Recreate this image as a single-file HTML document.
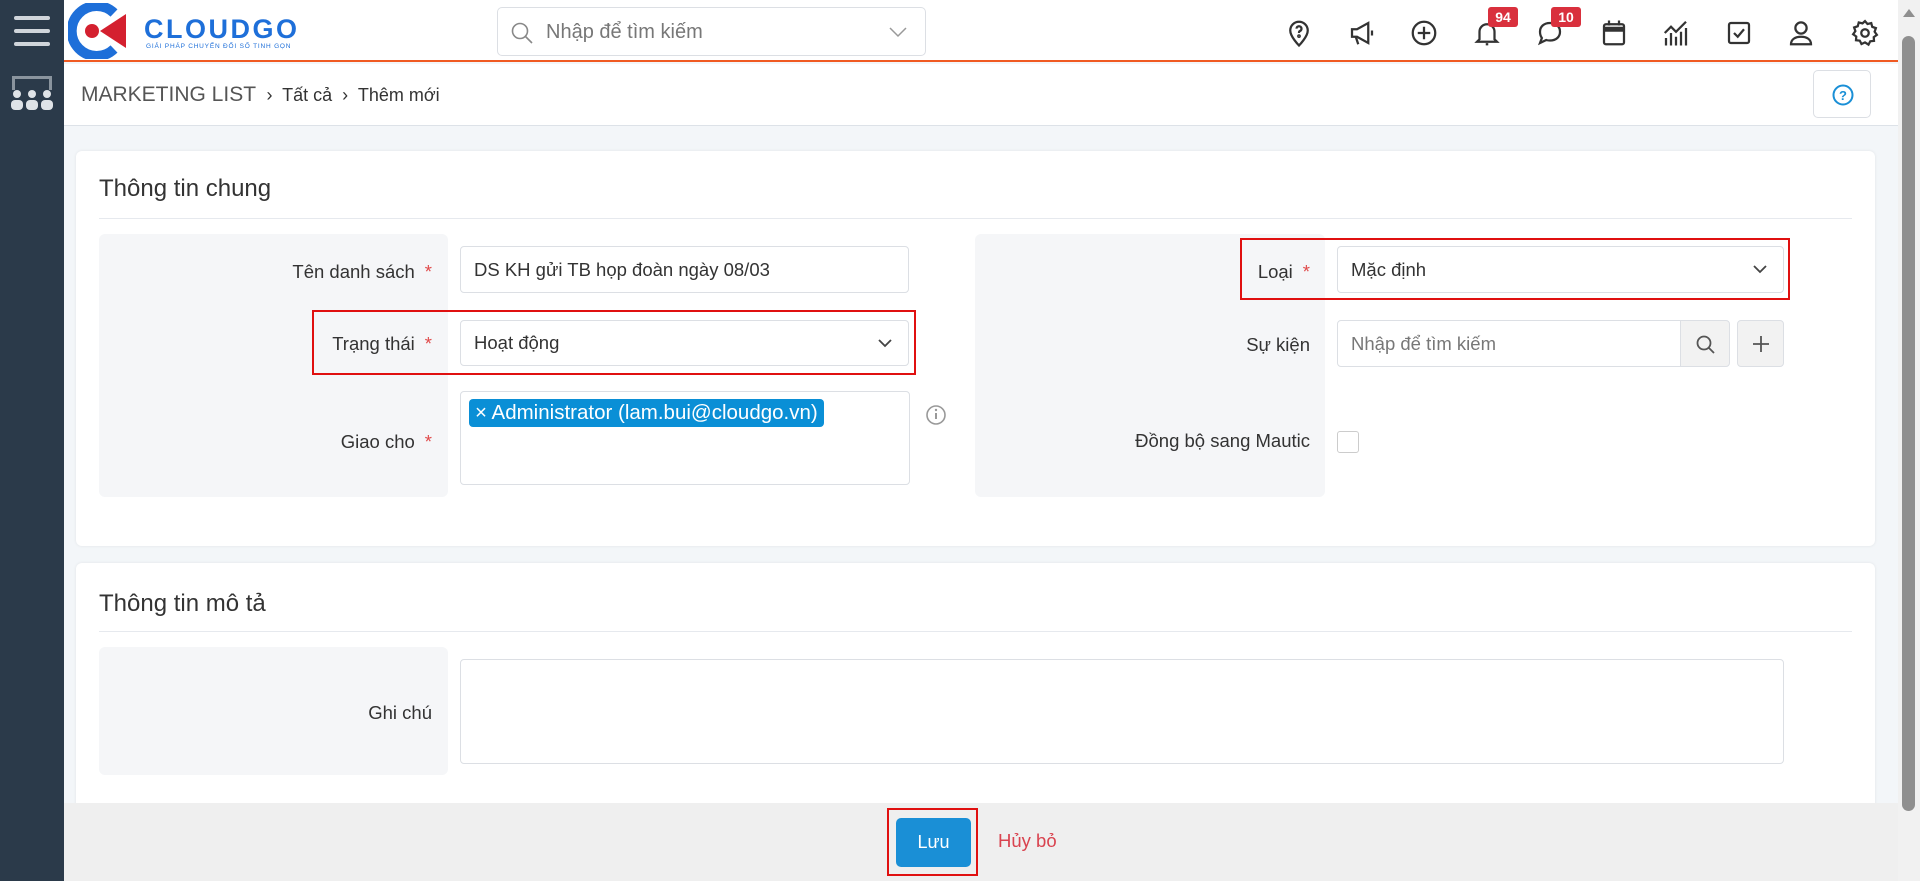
<!DOCTYPE html>
<html><head><meta charset="utf-8"><style>
*{box-sizing:border-box;margin:0;padding:0}
body{width:1920px;height:881px;overflow:hidden;background:#f3f6f9;font-family:"Liberation Sans",sans-serif;color:#333;position:relative}
.a{position:absolute}
.side{left:0;top:0;width:64px;height:881px;background:#2b3a4a}
.hdr{left:64px;top:0;width:1834px;height:62px;background:#fff;border-bottom:2px solid #f05a22}
.bc{left:64px;top:64px;width:1834px;height:62px;background:#fff;border-bottom:1px solid #dde2e8}
.card{background:#fff;border-radius:6px;box-shadow:0 0 3px rgba(0,0,0,.08)}
.ttl{font-size:24px;color:#333}
.hr{height:1px;background:#e6e9ee}
.lb{background:#f5f6f8;border-radius:6px}
.lab{font-size:18.5px;color:#333;text-align:right}
.st{color:#e04b4b;margin-left:10px}
.inp{background:#fff;border:1px solid #dcdfe4;border-radius:4px;font-size:18.5px;padding:0 13px;display:flex;align-items:center}
.red{border:2px solid #e01010}
.ic{width:30px;height:30px;top:18px}
.badge{background:#d9303d;color:#fff;font-size:14px;font-weight:bold;border-radius:3px;text-align:center;line-height:20px;height:20px;top:7px}
</style></head><body>
<div class="a side">
 <div class="a" style="left:14px;top:16px;width:36px;height:4px;background:#d0d5db;border-radius:2px"></div>
 <div class="a" style="left:14px;top:29px;width:36px;height:4px;background:#d0d5db;border-radius:2px"></div>
 <div class="a" style="left:14px;top:42px;width:36px;height:4px;background:#d0d5db;border-radius:2px"></div>
 <div class="a" style="left:12px;top:76px;width:40px;height:14px;border:3px solid #8a949e;border-bottom:none"></div>
 <svg class="a" style="left:9px;top:88px" width="46" height="24"><g fill="#dfe3e7"><circle cx="8" cy="6" r="4"/><circle cx="23" cy="6" r="4"/><circle cx="38" cy="6" r="4"/><rect x="2" y="12" width="12" height="10" rx="4"/><rect x="17" y="12" width="12" height="10" rx="4"/><rect x="32" y="12" width="12" height="10" rx="4"/></g></svg>
</div>
<div class="a hdr">
 <svg class="a" style="left:4px;top:3px" width="62" height="56"><path d="M46 10 A25 25 0 1 0 46 46" fill="none" stroke="#1e6fd9" stroke-width="10"/><circle cx="24" cy="28" r="7" fill="#d4202f"/><path d="M32 28 L58 11 L58 45Z" fill="#d4202f"/></svg>
 <div class="a" style="left:80px;top:14px;font-size:27px;font-weight:bold;color:#1e6fd9;letter-spacing:2.5px">CLOUDGO</div>
 <div class="a" style="left:82px;top:43px;font-size:6.5px;color:#1e6fd9;letter-spacing:.8px">GIẢI PHÁP CHUYỂN ĐỔI SỐ TINH GỌN</div>
 <div class="a" style="left:433px;top:7px;width:429px;height:49px;border:1px solid #dcdfe4;border-radius:5px">
  <svg class="a" style="left:12px;top:13px" width="24" height="24"><circle cx="10" cy="10" r="7.5" fill="none" stroke="#888" stroke-width="1.6"/><path d="M15.5 15.5L22 22" stroke="#888" stroke-width="1.6"/></svg>
  <div class="a" style="left:48px;top:13px;font-size:20px;color:#777">Nhập để tìm kiếm</div>
  <svg class="a" style="left:390px;top:18px" width="20" height="12"><path d="M2 2l8 8 8-8" fill="none" stroke="#999" stroke-width="1.5"/></svg>
 </div>
 <svg class="a ic" style="left:1220px" viewBox="0 0 24 24" fill="none" stroke="#333" stroke-width="1.8"><path d="M12 22s-7-7-7-12a7 7 0 0 1 14 0c0 5-7 12-7 12z"/><path d="M10 8.5a2 2 0 1 1 2.5 2c-.5.2-.5.8-.5 1.5"/><circle cx="12" cy="14.5" r=".6"/></svg>
 <svg class="a ic" style="left:1283px" viewBox="0 0 24 24" fill="none" stroke="#333" stroke-width="1.8"><path d="M4 9h4l9-5v16l-9-5H4z"/><path d="M7 15l2 6"/><path d="M20 10v4"/></svg>
 <svg class="a ic" style="left:1345px" viewBox="0 0 24 24" fill="none" stroke="#333" stroke-width="1.8"><circle cx="12" cy="12" r="9"/><path d="M12 7v10M7 12h10"/></svg>
 <svg class="a ic" style="left:1408px" viewBox="0 0 24 24" fill="none" stroke="#333" stroke-width="1.8"><path d="M6 17V11a6 6 0 0 1 12 0v6l2 2H4z"/><path d="M11 21h2"/></svg>
 <svg class="a ic" style="left:1471px" viewBox="0 0 24 24" fill="none" stroke="#333" stroke-width="1.8"><path d="M12 4c5 0 8 3 8 7s-3 7-8 7c-1 0-2 0-3-.4L4 20l1.5-4C4.5 14.6 4 13 4 11c0-4 3-7 8-7z"/></svg>
 <svg class="a ic" style="left:1535px" viewBox="0 0 24 24" fill="none" stroke="#333" stroke-width="1.8"><rect x="4" y="5" width="16" height="16" rx="1.5"/><path d="M4 9h16" stroke-width="4"/><path d="M8 2v4M16 2v4"/></svg>
 <svg class="a ic" style="left:1597px" viewBox="0 0 24 24" fill="none" stroke="#333" stroke-width="1.8"><path d="M3 12l5-5 4 4 8-8"/><path d="M4 16v6M8 12v10M12 15v7M16 11v11M20 8v14"/></svg>
 <svg class="a ic" style="left:1660px" viewBox="0 0 24 24" fill="none" stroke="#333" stroke-width="1.8"><rect x="4" y="4" width="16" height="16" rx="1.5"/><path d="M8 12l3 3 5-6"/></svg>
 <svg class="a ic" style="left:1722px" viewBox="0 0 24 24" fill="none" stroke="#333" stroke-width="1.8"><circle cx="12" cy="8" r="4.5"/><path d="M4 21c0-4 3.5-6 8-6s8 2 8 6z"/></svg>
 <svg class="a ic" style="left:1786px" viewBox="0 0 24 24" fill="none" stroke="#333" stroke-width="1.8"><circle cx="12" cy="12" r="3"/><path d="M12 2.5l2 2.3 3-.7.8 3 2.9 1-1 2.9 1.8 2.5-2.5 1.8.2 3-3 .3-1.4 2.7L12 19.5l-2.8 1.3-1.4-2.7-3-.3.2-3L2.5 13l1.8-2.5-1-2.9 2.9-1 .8-3 3 .7z"/></svg>
 <div class="a badge" style="left:1424px;width:30px">94</div>
 <div class="a badge" style="left:1487px;width:30px">10</div>
</div>
<div class="a bc">
 <div class="a" style="left:17px;top:19px;font-size:21px;color:#555">MARKETING LIST <span style="font-size:18px;color:#333">&nbsp;›&nbsp; Tất cả &nbsp;›&nbsp; Thêm mới</span></div>
 <div class="a" style="left:1749px;top:6px;width:58px;height:48px;border:1px solid #dcdfe4;border-radius:5px"><svg class="a" style="left:17px;top:12px" width="24" height="24"><circle cx="12" cy="12" r="9.5" fill="none" stroke="#1a8fd6" stroke-width="2"/><text x="12" y="17" text-anchor="middle" font-size="13" font-weight="bold" fill="#1a8fd6" font-family="Liberation Sans">?</text></svg></div>
</div>
<div class="a" style="left:1898px;top:0;width:22px;height:881px;background:#f1f1f1"><div class="a" style="left:4px;top:36px;width:13px;height:775px;background:#8f8f8f;border-radius:7px"></div><svg class="a" style="left:4px;top:8px" width="14" height="10"><path d="M7 1L13 9H1z" fill="#8f8f8f"/></svg></div>

<div class="a card" style="left:76px;top:151px;width:1799px;height:395px">
 <div class="a ttl" style="left:23px;top:24px">Thông tin chung</div>
 <div class="a hr" style="left:23px;top:67px;width:1753px"></div>
 <div class="a lb" style="left:23px;top:83px;width:349px;height:263px"></div>
 <div class="a lb" style="left:899px;top:83px;width:350px;height:263px"></div>
 <div class="a lab" style="left:23px;top:110px;width:333px">Tên danh sách<span class="st">*</span></div>
 <div class="a inp" style="left:384px;top:95px;width:449px;height:47px">DS KH gửi TB họp đoàn ngày 08/03</div>
 <div class="a lab" style="left:23px;top:182px;width:333px">Trạng thái<span class="st">*</span></div>
 <div class="a inp" style="left:384px;top:169px;width:449px;height:46px">Hoạt động</div>
 <svg class="a" style="left:801px;top:187px" width="16" height="10"><path d="M2 2l6 6 6-6" fill="none" stroke="#444" stroke-width="1.8"/></svg>
 <div class="a lab" style="left:23px;top:280px;width:333px">Giao cho<span class="st">*</span></div>
 <div class="a inp" style="left:384px;top:240px;width:450px;height:94px;align-items:flex-start;padding:7px 8px">
  <span style="background:#0a8fd6;color:#fff;border-radius:4px;padding:2px 6px;font-size:20.5px;white-space:nowrap">× Administrator (lam.bui@cloudgo.vn)</span></div>
 <svg class="a" style="left:849px;top:253px" width="22" height="22"><circle cx="11" cy="11" r="9" fill="none" stroke="#999" stroke-width="1.6"/><path d="M11 9v6" stroke="#999" stroke-width="2"/><circle cx="11" cy="6" r="1.2" fill="#999"/></svg>
 <div class="a lab" style="left:899px;top:110px;width:335px">Loại<span class="st">*</span></div>
 <div class="a inp" style="left:1261px;top:95px;width:447px;height:47px">Mặc định</div>
 <svg class="a" style="left:1676px;top:113px" width="16" height="10"><path d="M2 2l6 6 6-6" fill="none" stroke="#444" stroke-width="1.8"/></svg>
 <div class="a lab" style="left:899px;top:183px;width:335px">Sự kiện</div>
 <div class="a inp" style="left:1261px;top:169px;width:344px;height:47px;color:#777;border-radius:4px 0 0 4px">Nhập để tìm kiếm</div>
 <div class="a" style="left:1604px;top:169px;width:50px;height:47px;background:#f2f2f2;border:1px solid #dcdfe4;border-radius:0 4px 4px 0"><svg class="a" style="left:14px;top:13px" width="22" height="22"><circle cx="9" cy="9" r="6.5" fill="none" stroke="#555" stroke-width="1.8"/><path d="M14 14l5 5" stroke="#555" stroke-width="1.8"/></svg></div>
 <div class="a" style="left:1661px;top:169px;width:47px;height:47px;background:#f2f2f2;border:1px solid #dcdfe4;border-radius:4px"><svg class="a" style="left:13px;top:13px" width="20" height="20"><path d="M10 2v16M2 10h16" stroke="#555" stroke-width="1.8"/></svg></div>
 <div class="a lab" style="left:899px;top:279px;width:335px">Đồng bộ sang Mautic</div>
 <div class="a" style="left:1261px;top:280px;width:22px;height:22px;border:1px solid #ccc;border-radius:3px;background:#fff"></div>
</div>
<div class="a red" style="left:312px;top:310px;width:604px;height:65px"></div>
<div class="a red" style="left:1240px;top:238px;width:550px;height:62px"></div>

<div class="a card" style="left:76px;top:563px;width:1799px;height:260px">
 <div class="a ttl" style="left:23px;top:27px">Thông tin mô tả</div>
 <div class="a hr" style="left:23px;top:68px;width:1753px"></div>
 <div class="a lb" style="left:23px;top:84px;width:349px;height:128px"></div>
 <div class="a lab" style="left:23px;top:139px;width:333px">Ghi chú</div>
 <div class="a inp" style="left:384px;top:96px;width:1324px;height:105px"></div>
</div>
<div class="a" style="left:64px;top:803px;width:1834px;height:78px;background:#efefef"></div>
<div class="a" style="left:896px;top:818px;width:75px;height:49px;background:#1a8fd6;border-radius:5px;color:#fff;font-size:18px;text-align:center;line-height:49px">Lưu</div>
<div class="a red" style="left:887px;top:808px;width:91px;height:68px"></div>
<div class="a" style="left:998px;top:830px;font-size:18.5px;color:#d9434f">Hủy bỏ</div>
</body></html>
